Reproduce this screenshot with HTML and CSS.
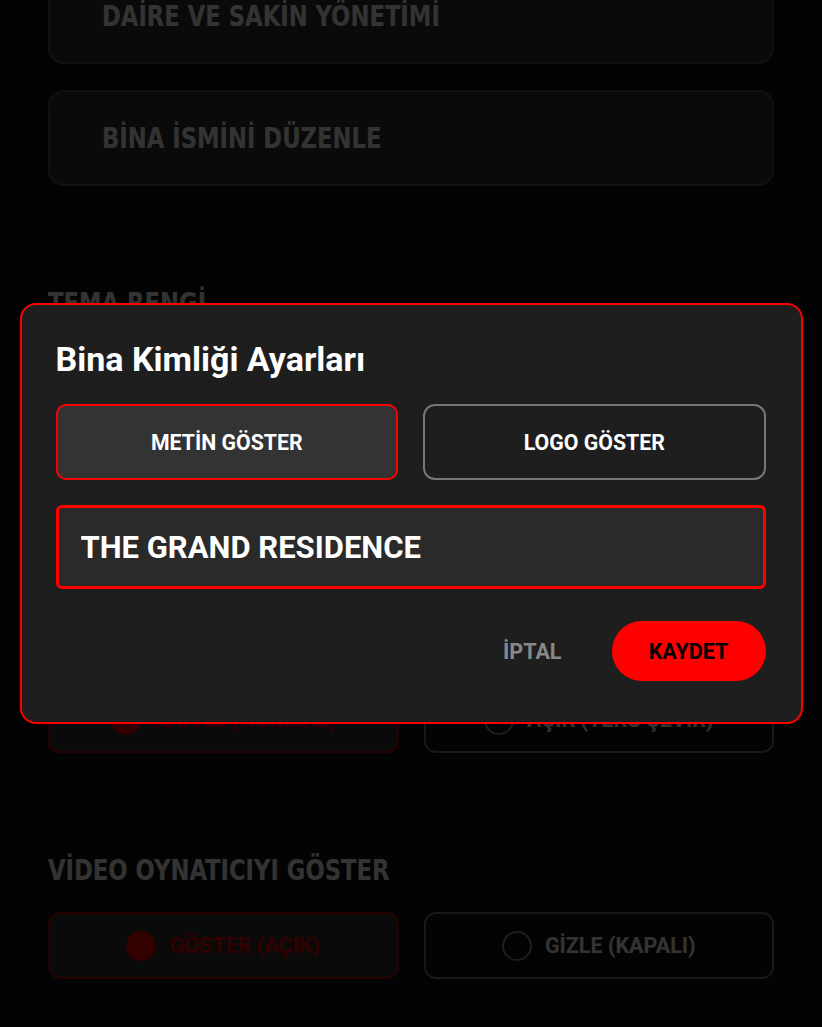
FILE: index.html
```html
<!DOCTYPE html>
<html lang="tr">

<head>
    <meta charset="UTF-8">
    <meta name="viewport" content="width=device-width, initial-scale=1.0">
    <title>Bina Ayarları</title>
    <link rel="stylesheet" href="styles.css">
</head>

<body>
    <div class="settings">
        <div class="settings__menu">
            <div class="menu-card"><span class="narrow">DAİRE VE SAKİN YÖNETİMİ</span></div>
            <div class="menu-card"><span class="narrow">BİNA İSMİNİ DÜZENLE</span></div>
        </div>

        <div class="settings__section">
            <h2 class="section-label"><span class="narrow">TEMA RENGİ</span></h2>
            <div class="swatches">
                <div class="swatch swatch--red selected"></div>
                <div class="swatch swatch--blue"></div>
                <div class="swatch swatch--green"></div>
                <div class="swatch swatch--gold"></div>
            </div>
        </div>

        <div class="settings__section">
            <h2 class="section-label"><span class="narrow">EKRAN YÖNÜ</span></h2>
            <div class="radio-row">
                <div class="radio selected">
                    <span class="radio__dot"></span>
                    <span class="radio__text">KAPALI (NORMAL)</span>
                </div>
                <div class="radio">
                    <span class="radio__dot"></span>
                    <span class="radio__text">AÇIK (TERS ÇEVİR)</span>
                </div>
            </div>
        </div>

        <div class="settings__section">
            <h2 class="section-label"><span class="narrow">VİDEO OYNATICIYI GÖSTER</span></h2>
            <div class="radio-row">
                <div class="radio selected">
                    <span class="radio__dot"></span>
                    <span class="radio__text">GÖSTER (AÇIK)</span>
                </div>
                <div class="radio">
                    <span class="radio__dot"></span>
                    <span class="radio__text">GİZLE (KAPALI)</span>
                </div>
            </div>
        </div>
    </div>

    <!-- building identity dialog -->
    <div class="overlay">
        <div class="dialog">
            <h1 class="dialog__title">Bina Kimliği Ayarları</h1>
            <div class="dialog__modes">
                <button class="mode-btn active">METİN GÖSTER</button>
                <button class="mode-btn">LOGO GÖSTER</button>
            </div>
            <input type="text" class="dialog__input" value="THE GRAND RESIDENCE">
            <div class="dialog__actions">
                <button class="btn-cancel">İPTAL</button>
                <button class="btn-save">KAYDET</button>
            </div>
        </div>
    </div>
</body>

</html>
```

FILE: styles.css
```css
* {
    box-sizing: border-box;
}

body {
    margin: 0;
    background-color: #121212;
    font-family: Roboto, "Liberation Sans", sans-serif;
    overflow: hidden;
}

.settings {
    margin-top: -32px;
    padding: 0 48px;
}

.settings__menu {
    display: flex;
    flex-direction: column;
    gap: 26px;
}

/* condensed headings */
.narrow {
    display: inline-block;
    white-space: nowrap;
    transform: scaleX(0.87);
    transform-origin: left center;
}

.menu-card {
    height: 96px;
    display: flex;
    align-items: center;
    padding-left: 52px;
    background-color: #333;
    border: 2px solid #555;
    border-radius: 16px;
    color: #fff;
    font-family: "DejaVu Sans Condensed", "DejaVu Sans", sans-serif;
    font-weight: 700;
    font-size: 29px;
}

.settings__section {
    margin-top: 102px;
    display: flex;
    flex-direction: column;
    gap: 27px;
}

.section-label {
    margin: 0;
    height: 30px;
    line-height: 30px;
    color: #fff;
    font-family: "DejaVu Sans Condensed", "DejaVu Sans", sans-serif;
    font-weight: 700;
    font-size: 29px;
}

.swatches {
    height: 182px;
    display: grid;
    grid-template-columns: repeat(4, 1fr);
    gap: 10px;
}

.swatch {
    border-radius: 12px;
    border: 2px solid #555;
}

.swatch.selected {
    border-color: #fff;
}

.swatch--red { background-color: #ff0000; }
.swatch--blue { background-color: #1e6fff; }
.swatch--green { background-color: #16c45a; }
.swatch--gold { background-color: #e0a800; }

.radio-row {
    display: grid;
    grid-template-columns: 1fr 1fr;
    gap: 25px;
}

.radio {
    height: 67px;
    display: flex;
    align-items: center;
    justify-content: center;
    gap: 13px;
    border: 2px solid #777;
    border-radius: 12px;
    color: #fff;
    font-weight: 700;
    font-size: 21.5px;
}

.radio__dot {
    width: 30px;
    height: 30px;
    border-radius: 50%;
    border: 2px solid #999;
}

.radio.selected {
    border-color: #cc0000;
    background-color: #333;
    color: #ff0000;
}

.radio.selected .radio__dot {
    border: none;
    background-color: #ff0000;
}

/* dialog */

.overlay {
    position: fixed;
    inset: 0;
    background-color: rgba(0, 0, 0, 0.8);
    display: flex;
    align-items: center;
    justify-content: center;
}

.dialog {
    width: calc(100% - 39px);
    padding: 35px 35px 41px 34px;
    background-color: #1e1e1e;
    border: 2px solid #ff0000;
    border-radius: 16px;
    display: flex;
    flex-direction: column;
}

.dialog__title {
    margin: 0;
    color: #fff;
    font-size: 34px;
    line-height: 39px;
    font-weight: 700;
}

.dialog__modes {
    margin-top: 25px;
    display: grid;
    grid-template-columns: 1fr 1fr;
    gap: 25px;
}

.mode-btn {
    height: 76px;
    background-color: transparent;
    border: 2px solid #777;
    border-radius: 12px;
    color: #fff;
    font-family: Roboto, sans-serif;
    font-weight: 700;
    font-size: 21.3px;
}

.mode-btn.active {
    background-color: #333;
    border-color: #ff0000;
    border-radius: 10px;
}

.dialog__input {
    margin-top: 25px;
    height: 84px;
    padding: 0 22px;
    background-color: #2a2a2a;
    border: 3px solid #ff0000;
    border-radius: 6px;
    outline: none;
    color: #fff;
    font-family: Roboto, sans-serif;
    font-weight: 700;
    font-size: 31px;
}

.dialog__actions {
    margin-top: 32px;
    display: flex;
    justify-content: flex-end;
    align-items: center;
    gap: 50px;
}

.btn-cancel {
    padding: 0;
    background: none;
    border: none;
    color: #888;
    font-family: Roboto, sans-serif;
    font-weight: 700;
    font-size: 21.5px;
}

.btn-save {
    width: 154px;
    height: 60px;
    background-color: #ff0000;
    border: none;
    border-radius: 30px;
    color: #000;
    font-family: Roboto, sans-serif;
    font-weight: 700;
    font-size: 21.5px;
}
```
